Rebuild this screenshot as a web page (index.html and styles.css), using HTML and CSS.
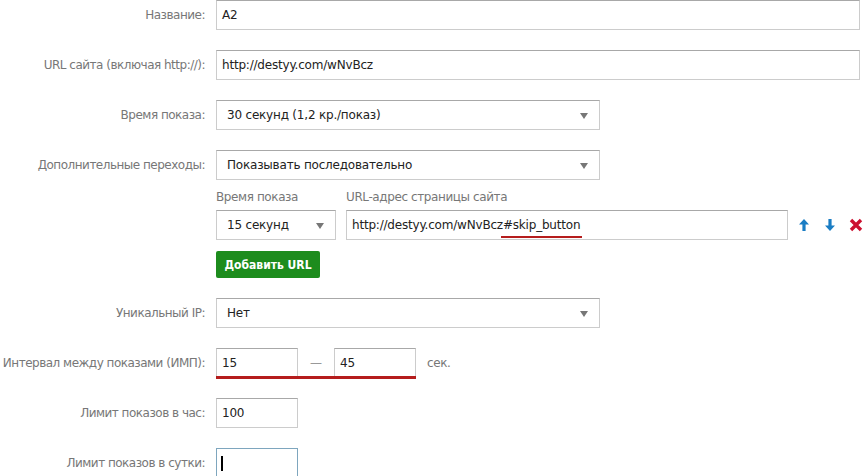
FILE: index.html
```html
<!DOCTYPE html>
<html lang="ru">
<head>
    <meta charset="UTF-8">
    <title>Настройки показа</title>
    <link rel="stylesheet" href="styles.css">
</head>
<body>
    <div class="form">
        <div class="row">
            <div class="label">Название:</div>
            <div class="input wide">A2</div>
        </div>

        <div class="row">
            <div class="label">URL сайта (включая http://):</div>
            <div class="input wide">http://destyy.com/wNvBcz</div>
        </div>

        <div class="row">
            <div class="label">Время показа:</div>
            <div class="select mid">30 секунд (1,2 кр./показ)<span class="caret"></span></div>
        </div>

        <div class="row top">
            <div class="label label-top">Дополнительные переходы:</div>
            <div class="field">
                <div class="select mid">Показывать последовательно<span class="caret"></span></div>

                <div class="sub-head">
                    <span class="sub-time">Время показа</span>
                    <span>URL-адрес страницы сайта</span>
                </div>
                <div class="sub-row">
                    <div class="select small">15 секунд<span class="caret"></span></div>
                    <div class="input url">http://destyy.com/wNvBcz<span class="mark">#skip_button</span></div>
                    <div class="actions">
                        <!-- стрелки и удалить -->
                        <svg width="14" height="14" viewBox="0 0 14 14"><path d="M7 1 L12 6.5 H8.6 V13 H5.4 V6.5 H2 Z" fill="#1a7dc4"/></svg>
                        <svg width="14" height="14" viewBox="0 0 14 14"><path d="M7 13 L12 7.5 H8.6 V1 H5.4 V7.5 H2 Z" fill="#1a7dc4"/></svg>
                        <svg width="14" height="14" viewBox="0 0 14 14"><path d="M2 2 L12 12 M12 2 L2 12" stroke="#cc1030" stroke-width="3.4" stroke-linecap="butt"/></svg>
                    </div>
                </div>
                <button class="btn-add">Добавить URL</button>
            </div>
        </div>

        <div class="row">
            <div class="label">Уникальный IP:</div>
            <div class="select mid">Нет<span class="caret"></span></div>
        </div>

        <div class="row">
            <div class="label">Интервал между показами (ИМП):</div>
            <div class="range">
                <div class="input short">15</div>
                <span class="dash">—</span>
                <div class="input short">45</div>
            </div>
            <span class="unit">сек.</span>
        </div>

        <div class="row">
            <div class="label">Лимит показов в час:</div>
            <div class="input short">100</div>
        </div>

        <div class="row">
            <div class="label">Лимит показов в сутки:</div>
            <div class="input short focus"><span class="cursor"></span></div>
        </div>
    </div>
</body>
</html>
```

FILE: styles.css
```css
body {
    margin: 0;
    background-color: #fff;
    font-family: "DejaVu Sans", Verdana, sans-serif;
    font-size: 12px;
    color: #222;
}
.form {
    width: 864px;
}
.row {
    display: flex;
    align-items: center;
    margin-bottom: 20px;
}
.row.top {
    align-items: flex-start;
}
.label {
    width: 205px;
    padding-right: 11px;
    text-align: right;
    color: #777;
    letter-spacing: -0.5px;
    white-space: nowrap;
    flex-shrink: 0;
}
.label-top {
    line-height: 30px;
}

/* поля ввода */
.input, .select {
    position: relative;
    box-sizing: border-box;
    height: 30px;
    line-height: 28px;
    padding: 0 5px;
    border: 1px solid #ccc;
    border-top-color: #a8a8a8;
    background-color: #fff;
    letter-spacing: -0.2px;
    white-space: nowrap;
}
.select {
    padding-left: 10px;
}
.wide { width: 644px; }
.mid { width: 384px; }
.small { width: 120px; }
.short { width: 82px; }
.url { width: 442px; }
.input.focus {
    border-color: #7ea6be;
}
.cursor {
    display: inline-block;
    width: 2px;
    height: 15px;
    background-color: #000;
    vertical-align: middle;
    margin-left: -1px;
}
.caret {
    position: absolute;
    right: 11px;
    top: 12px;
    width: 0;
    height: 0;
    border-left: 4px solid transparent;
    border-right: 4px solid transparent;
    border-top: 6px solid #777;
}

/* блок дополнительных переходов */
.sub-head {
    display: flex;
    color: #777;
    letter-spacing: -0.4px;
    line-height: 16px;
    margin-top: 9px;
    margin-bottom: 5px;
}
.sub-time {
    width: 130px;
}
.sub-row {
    display: flex;
    align-items: center;
    gap: 10px;
}
.actions {
    display: flex;
    gap: 12px;
    margin-left: -1px;
}
.mark {
    position: relative;
}
.mark::after {
    content: "";
    position: absolute;
    left: -2px;
    right: -2px;
    bottom: -6px;
    height: 2px;
    background-color: #b51d1d;
}
.btn-add {
    display: block;
    margin-top: 11px;
    width: 104px;
    height: 27px;
    padding: 0;
    border: none;
    border-radius: 2px;
    background-color: #1d8c1d;
    color: #fff;
    font-family: "DejaVu Sans Condensed", "DejaVu Sans", sans-serif;
    font-weight: bold;
    font-size: 12px;
}

/* интервал */
.range {
    position: relative;
    display: flex;
    align-items: center;
}
.range::after {
    content: "";
    position: absolute;
    left: 0;
    right: 0;
    bottom: -1px;
    height: 3px;
    background-color: #b51d1d;
}
.dash {
    width: 36px;
    text-align: center;
    color: #999;
}
.unit {
    margin-left: 11px;
    color: #777;
    letter-spacing: -0.4px;
}
```
